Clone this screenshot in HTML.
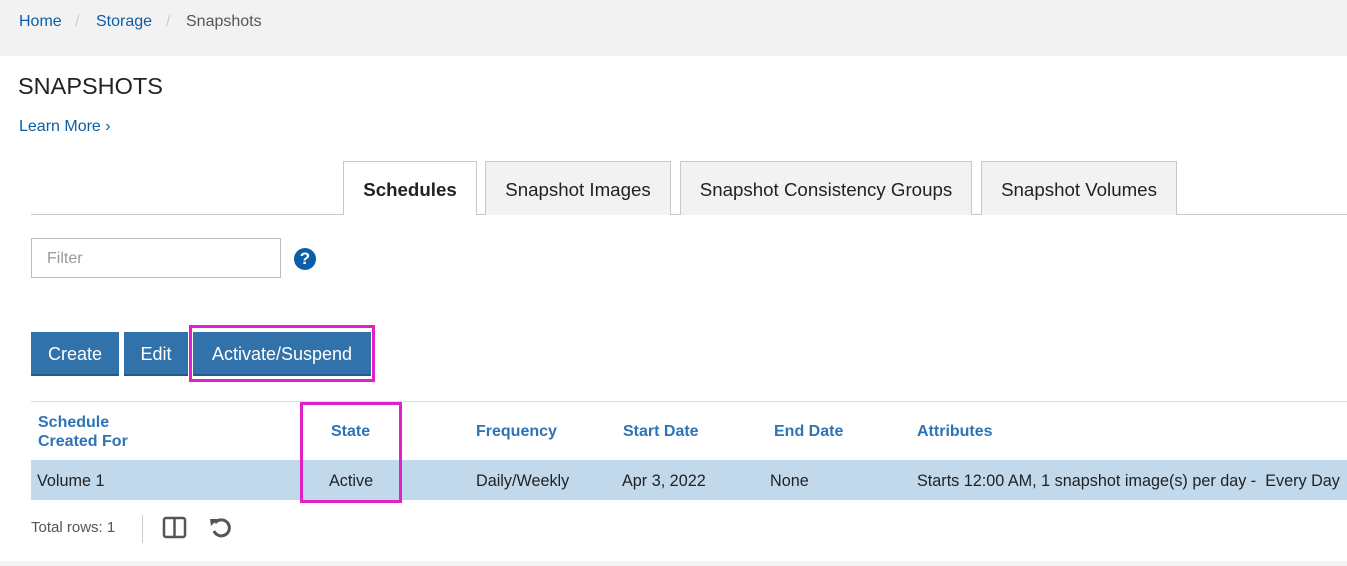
<!DOCTYPE html>
<html><head><meta charset="utf-8"><style>
*{margin:0;padding:0;box-sizing:border-box}
body{width:1347px;height:566px;overflow:hidden;background:#fff;font-family:"Liberation Sans",Arial,sans-serif;position:relative;color:#333}
.a{position:absolute;white-space:nowrap}
.bc{left:0;top:0;width:1347px;height:56px;background:#f2f2f2}
.link{color:#0b5ea8}
.tab{position:absolute;top:161px;height:54px;border:1px solid #c8c8c8;border-bottom:none;background:#f2f2f2;font-size:18.7px;line-height:55px;text-align:center;color:#222}
.btn{position:absolute;top:332px;height:44px;background:#3272ab;color:#fff;font-size:18px;line-height:44px;text-align:center;border-bottom:2px solid #25598a}
.th{color:#2d74b6;font-weight:bold;font-size:16px}
.td{font-size:16.2px;color:#222}
.mag{position:absolute;border:3px solid #e020c8}
</style></head><body>
<div class="a bc"></div>
<div class="a link" style="left:19px;top:13px;font-size:16px">Home</div>
<div class="a" style="left:75px;top:13px;font-size:16px;color:#ccc">/</div>
<div class="a link" style="left:96px;top:13px;font-size:16px">Storage</div>
<div class="a" style="left:166px;top:13px;font-size:16px;color:#ccc">/</div>
<div class="a" style="left:186px;top:13px;font-size:16px;color:#555">Snapshots</div>
<div class="a" style="left:18px;top:73px;font-size:23.5px;color:#222">SNAPSHOTS</div>
<div class="a link" style="left:19px;top:118px;font-size:16px">Learn More ›</div>
<div class="a" style="left:31px;top:214px;width:1316px;height:1px;background:#c8c8c8"></div>
<div class="tab" style="left:343px;width:134px;height:54px;background:#fff;font-weight:bold;">Schedules</div>
<div class="tab" style="left:485px;width:186px">Snapshot Images</div>
<div class="tab" style="left:680px;width:292px">Snapshot Consistency Groups</div>
<div class="tab" style="left:981px;width:196px">Snapshot Volumes</div>
<div class="a" style="left:31px;top:238px;width:250px;height:40px;border:1px solid #bbb"></div>
<div class="a" style="left:47px;top:250px;font-size:16px;color:#999">Filter</div>
<div class="a" style="left:294px;top:248px;width:22px;height:22px;border-radius:50%;background:#0b5ea8;color:#fff;font-weight:bold;font-size:17px;line-height:22px;text-align:center">?</div>
<div class="btn" style="left:31px;width:88px">Create</div>
<div class="btn" style="left:124px;width:64px">Edit</div>
<div class="btn" style="left:193px;width:178px">Activate/Suspend</div>
<div class="mag" style="left:189px;top:325px;width:186px;height:57px"></div>
<div class="a" style="left:31px;top:401px;width:1316px;height:1px;background:#ddd"></div>
<div class="a th" style="left:38px;top:413px;line-height:19px">Schedule<br>Created For</div>
<div class="a th" style="left:331px;top:423px">State</div>
<div class="a th" style="left:476px;top:423px">Frequency</div>
<div class="a th" style="left:623px;top:423px">Start Date</div>
<div class="a th" style="left:774px;top:423px">End Date</div>
<div class="a th" style="left:917px;top:423px">Attributes</div>
<div class="a" style="left:31px;top:460px;width:1316px;height:40px;background:#c2d9ec"></div>
<div class="a td" style="left:37px;top:472px">Volume 1</div>
<div class="a td" style="left:329px;top:472px">Active</div>
<div class="a td" style="left:476px;top:472px">Daily/Weekly</div>
<div class="a td" style="left:622px;top:472px">Apr 3, 2022</div>
<div class="a td" style="left:770px;top:472px">None</div>
<div class="a td" style="left:917px;top:472px">Starts 12:00 AM, 1 snapshot image(s) per day -&nbsp; Every Day</div>
<div class="mag" style="left:300px;top:402px;width:102px;height:101px"></div>
<div class="a" style="left:31px;top:519px;font-size:15px;color:#555">Total rows: 1</div>
<div class="a" style="left:142px;top:515px;width:1px;height:28px;background:#ccc"></div>
<svg class="a" style="left:162px;top:516px" width="26" height="24" viewBox="0 0 26 24"><rect x="2" y="2" width="21" height="19" rx="2" fill="none" stroke="#555" stroke-width="2.5"/><line x1="12.5" y1="2" x2="12.5" y2="21" stroke="#555" stroke-width="2.5"/></svg>
<svg class="a" style="left:208px;top:515px" width="26" height="26" viewBox="0 0 26 26"><path d="M7 8 A8 8 0 1 1 6 16" fill="none" stroke="#555" stroke-width="3"/><path d="M2 4 L10 4 L3 11 Z" fill="#555"/></svg>
<div class="a" style="left:0;top:561px;width:1347px;height:5px;background:#f2f2f2"></div>
</body></html>
